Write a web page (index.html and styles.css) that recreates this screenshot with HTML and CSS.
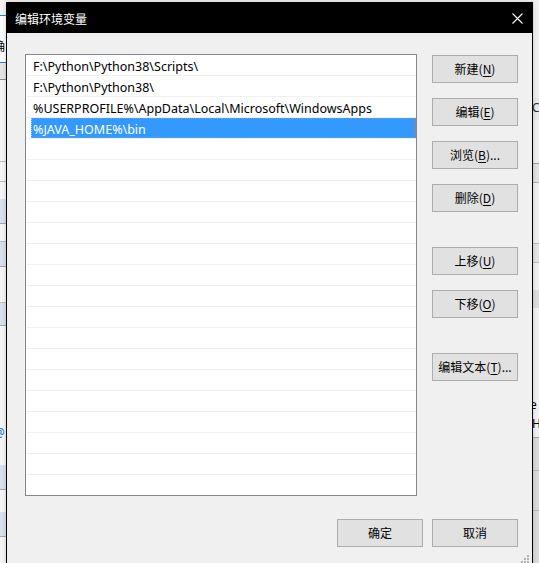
FILE: index.html
```html
<!DOCTYPE html>
<html lang="zh-CN">
<head>
<meta charset="utf-8">
<title>编辑环境变量</title>
<link rel="stylesheet" href="styles.css">
</head>
<body>
<div class="desktop">
  <div class="bg-left">
    <span class="frag frag-a">确</span>
    <span class="frag frag-b">@</span>
  </div>
  <div class="dialog">
    <div class="titlebar">
      <span class="title">编辑环境变量</span>
      <svg class="close" width="11" height="11" viewBox="0 0 11 11"><path d="M0.5 0.5 L10.5 10.5 M10.5 0.5 L0.5 10.5" stroke="#fff" stroke-width="1.1" fill="none"/></svg>
    </div>
    <div class="content">
      <div class="main">
        <div class="list">
          <div class="row"><span class="cell">F:\Python\Python38\Scripts\</span></div>
          <div class="row"><span class="cell">F:\Python\Python38\</span></div>
          <div class="row"><span class="cell">%USERPROFILE%\AppData\Local\Microsoft\WindowsApps</span></div>
          <div class="row"><span class="cell sel">%JAVA_HOME%\bin</span></div>
          <div class="row"></div><div class="row"></div><div class="row"></div><div class="row"></div>
          <div class="row"></div><div class="row"></div><div class="row"></div><div class="row"></div>
          <div class="row"></div><div class="row"></div><div class="row"></div><div class="row"></div>
          <div class="row"></div><div class="row"></div><div class="row"></div><div class="row"></div>
          <div class="row"></div>
        </div>
        <div class="side">
          <div class="group">
            <button class="btn">新建(<u>N</u>)</button>
            <button class="btn">编辑(<u>E</u>)</button>
            <button class="btn">浏览(<u>B</u>)...</button>
            <button class="btn">删除(<u>D</u>)</button>
          </div>
          <div class="group">
            <button class="btn">上移(<u>U</u>)</button>
            <button class="btn">下移(<u>O</u>)</button>
          </div>
          <div class="group">
            <button class="btn">编辑文本(<u>T</u>)...</button>
          </div>
        </div>
      </div>
      <div class="footer">
        <button class="btn">确定</button>
        <button class="btn">取消</button>
      </div>
    </div>
    <svg class="grip" width="8" height="8" viewBox="0 0 8 8">
      <rect x="6" y="0" width="2" height="2" fill="#b4b4b4"/>
      <rect x="3" y="3" width="2" height="2" fill="#b4b4b4"/>
      <rect x="6" y="3" width="2" height="2" fill="#b4b4b4"/>
      <rect x="0" y="6" width="2" height="2" fill="#b4b4b4"/>
      <rect x="3" y="6" width="2" height="2" fill="#b4b4b4"/>
      <rect x="6" y="6" width="2" height="2" fill="#b4b4b4"/>
    </svg>
  </div>
  <div class="bg-right">
    <span class="frag frag-c">C</span>
    <span class="frag frag-d">e</span>
    <span class="frag frag-e">H</span>
  </div>
</div>
</body>
</html>
```
FILE: styles.css
```css
* { box-sizing: border-box; }
html, body { margin: 0; padding: 0; }
body {
  background: #f0f0f0;
  font-family: "Noto Sans", "Noto Sans CJK SC", sans-serif;
  font-size: 12px;
  color: #000;
}
.desktop {
  display: flex;
  width: 539px;
  height: 563px;
  overflow: hidden;
}
.bg-left {
  width: 6px;
  flex: none;
  overflow: hidden;
  display: flex;
  flex-direction: column;
  background: linear-gradient(#f2f2f2 0 15px, #2b7fd4 15px 16px, #fbfbfb 16px 62px, #2b7fd4 62px 63px, #e4e4e4 63px 79px, #8c8c8c 79px 80px, #f4f4f4 80px 161px, #bdbdbd 161px 162px, #f4f4f4 162px 181px, #bdbdbd 181px 182px, #f4f4f4 182px 199px, #d7e0ea 199px 223px, #a8a8a8 223px 224px, #f4f4f4 224px 241px, #bdbdbd 241px 242px, #d7e0ea 242px 266px, #a8a8a8 266px 267px, #f4f4f4 267px 302px, #bdbdbd 302px 303px, #d7e0ea 303px 325px, #a8a8a8 325px 326px, #f4f4f4 326px 465px, #d7e0ea 465px 489px, #a8a8a8 489px 490px, #f4f4f4 490px 512px, #d7e0ea 512px 536px, #a8a8a8 536px 537px, #f4f4f4 537px);
}
.bg-right {
  width: 6px;
  flex: none;
  overflow: hidden;
  display: flex;
  flex-direction: column;
  background: linear-gradient(#f0f0f0 0 98px, #e8e8e8 98px 120px, #f0f0f0 120px 163px, #a0a0a0 163px 164px, #e2e2e2 164px 182px, #b0b0b0 182px 183px, #f0f0f0 183px 243px, #b8b8b8 243px 244px, #e4e4e4 244px 262px, #c0c0c0 262px 263px, #f0f0f0 263px 290px, #dcdcdc 290px 308px, #f0f0f0 308px 437px, #a0a0a0 437px 438px, #dadada 438px 470px, #b8b8b8 470px 471px, #dadada 471px 510px, #b8b8b8 510px 511px, #dadada 511px);
}
.frag {
  display: block;
  font-size: 12px;
  line-height: 14px;
  white-space: nowrap;
}
.frag-a { margin-top: 40px; margin-left: -7px; }
.frag-b { margin-top: 372px; margin-left: -6px; color: #2a6db0; }
.frag-c { margin-top: 101px; margin-left: -1px; color: #333; }
.frag-d { margin-top: 283px; margin-left: -3px; }
.frag-e { margin-top: 5px; margin-left: -1px; }

.dialog {
  position: relative;
  width: 527px;
  flex: none;
  margin-top: 2px;
  height: 570px;
  background: #f0f0f0;
  border: 1px solid #000;
  border-bottom: none;
  box-shadow: 0 0 4px rgba(0,0,0,0.18);
  display: flex;
  flex-direction: column;
}
.titlebar {
  height: 30px;
  background: #000;
  color: #fff;
  display: flex;
  align-items: center;
  justify-content: space-between;
  padding-left: 8px;
  padding-right: 9px;
  flex: none;
}
.title {
  font-family: "Noto Sans CJK SC", sans-serif;
  font-size: 12px;
  line-height: 16px;
  margin-top: 1px;
}
.close { display: block; margin-top: 1px; }
.content {
  padding: 21px 14px 0 18px;
  display: flex;
  flex-direction: column;
}
.main {
  display: flex;
  gap: 15px;
}
.list {
  width: 392px;
  height: 442px;
  border: 1px solid #828790;
  background: #fff;
  overflow: hidden;
}
.row {
  height: 21px;
  border-bottom: 1px solid #f0f0f0;
  padding-left: 5px;
}
.cell {
  display: block;
  height: 20px;
  padding-top: 4px;
  line-height: 16px;
  padding-left: 2px;
  white-space: nowrap;
  font-family: "Noto Sans", "Noto Sans CJK SC", sans-serif;
  font-size: 12.5px;
  color: #000;
}
.cell.sel {
  background: #3399ff;
  color: #fff;
  border: 1px dotted #cc7a33;
  border-left-color: #9cc8f0;
  border-top-color: #5aa6f5;
  border-bottom-color: #5aa6f5;
  padding-top: 3px;
  padding-left: 1px;
}
.side {
  display: flex;
  flex-direction: column;
  gap: 35px;
  padding-top: 1px;
}
.group {
  display: flex;
  flex-direction: column;
  gap: 15px;
}
.btn {
  width: 86px;
  height: 28px;
  padding: 0;
  margin: 0;
  background: #e1e1e1;
  border: 1px solid #adadad;
  font-family: "Noto Sans CJK SC", sans-serif;
  font-size: 12px;
  color: #000;
  line-height: 16px;
}
.btn u { text-decoration-thickness: 1px; text-underline-offset: 2px; }
.footer {
  display: flex;
  justify-content: flex-end;
  gap: 9px;
  margin-top: 23px;
}
.grip {
  position: absolute;
  right: 3px;
  top: 552px;
}
```
